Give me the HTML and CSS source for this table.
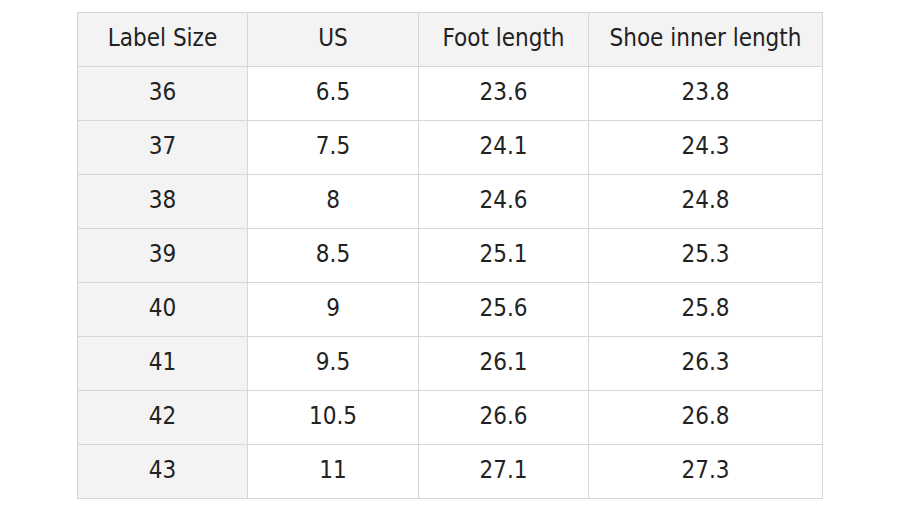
FILE: index.html
```html
<!DOCTYPE html>
<html>
<head>
<meta charset="utf-8">
<link rel="stylesheet" href="styles.css">
</head>
<body>
<div class="page">
<table class="size-table">
<colgroup><col class="c1"><col class="c2"><col class="c3"><col class="c4"></colgroup>
<thead>
<tr><th>Label Size</th><th>US</th><th>Foot length</th><th>Shoe inner length</th></tr>
</thead>
<tbody>
<tr><td class="first">36</td><td>6.5</td><td>23.6</td><td>23.8</td></tr>
<tr><td class="first">37</td><td>7.5</td><td>24.1</td><td>24.3</td></tr>
<tr><td class="first">38</td><td>8</td><td>24.6</td><td>24.8</td></tr>
<tr><td class="first">39</td><td>8.5</td><td>25.1</td><td>25.3</td></tr>
<tr><td class="first">40</td><td>9</td><td>25.6</td><td>25.8</td></tr>
<tr><td class="first">41</td><td>9.5</td><td>26.1</td><td>26.3</td></tr>
<tr><td class="first">42</td><td>10.5</td><td>26.6</td><td>26.8</td></tr>
<tr><td class="first">43</td><td>11</td><td>27.1</td><td>27.3</td></tr>
</tbody>
</table>
</div>
</body>
</html>
```
FILE: styles.css
```css
html, body {
  margin: 0;
  padding: 0;
  background: #ffffff;
}
.page {
  width: 900px;
  height: 523px;
  padding: 12px 0 0 77px;
  box-sizing: border-box;
}
.size-table {
  border-collapse: collapse;
  table-layout: fixed;
  width: 745px;
  font-family: "DejaVu Sans Condensed", "DejaVu Sans", sans-serif;
  font-size: 24px;
  color: #222222;
}
.c1 { width: 170px; }
.c2 { width: 171px; }
.c3 { width: 170px; }
.c4 { width: 234px; }
.size-table th,
.size-table td {
  border: 1px solid #d6d6d6;
  height: 54px;
  padding: 0 0 4px 0;
  box-sizing: border-box;
  text-align: center;
  vertical-align: middle;
  font-weight: normal;
}
.size-table th {
  background: #f3f3f3;
}
.size-table td.first {
  background: #f3f3f3;
}
```
